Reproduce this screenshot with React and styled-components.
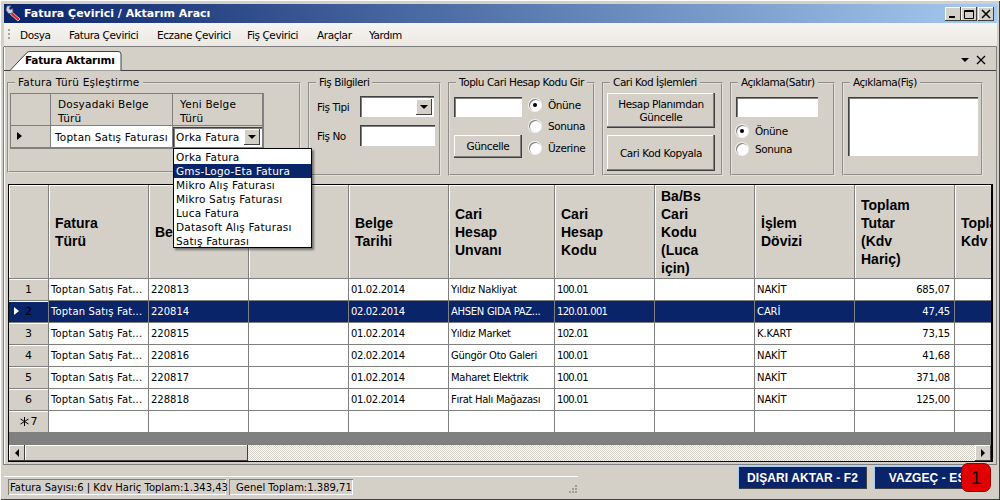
import React from "react";
import styled, { createGlobalStyle } from "styled-components";

const UI_FONT = `"DejaVu Sans", "Noto Sans", sans-serif`;
const FACE = "#d4d0c8";
const NAVY = "#0a246a";

const GlobalStyle = createGlobalStyle`
  html, body { margin: 0; padding: 0; background: ${FACE}; }
  body { font-family: ${UI_FONT}; font-size: 10.5px; letter-spacing: -0.4px; color: #000; }
  * { box-sizing: border-box; }
`;

const Win = styled.div`
  position: relative;
  width: 1000px;
  height: 500px;
  overflow: hidden;
  background: ${FACE};
  padding: 4px 3px 0 4px;
  display: flex;
  flex-direction: column;
  box-shadow: inset 1px 1px 0 #fff, inset -1px -1px 0 #404040;
`;
const TitleBar = styled.div`
  height: 19px;
  flex: none;
  display: flex;
  align-items: center;
  padding: 0 3px 0 1px;
  gap: 2px;
  background: linear-gradient(to right, ${NAVY}, #a6caf0);
  color: #fff;
  font-weight: bold;
  font-size: 11px;
  letter-spacing: 0;
`;
const TitleText = styled.span`
  flex: 1;
`;
const WinButton = styled.div`
  width: 16px;
  height: 14px;
  margin-left: ${(p) => p.$gap || 0}px;
  background: ${FACE};
  box-shadow: inset -1px -1px 0 #404040, inset 1px 1px 0 #fff;
  display: flex;
  align-items: center;
  justify-content: center;
`;
const MenuBar = styled.div`
  height: 24px;
  flex: none;
  display: flex;
  align-items: center;
  background: linear-gradient(to bottom, #f6f4f1, #ece9e4);
  border-bottom: 1px solid #808080;
  padding-left: 4px;
`;
const Gripper = styled.div`
  width: 2px;
  height: 11px;
  margin-right: 10px;
  background: repeating-linear-gradient(to bottom, #a8a59d 0 2px, transparent 2px 4px);
`;
const MenuItem = styled.span`
  width: ${(p) => p.$w}px;
  flex: none;
`;
const TabArea = styled.div`
  flex: none;
  height: 418px;
  margin-left: -1px;
  border-left: 1px solid #808080;
  border-right: 1px solid #808080;
  border-bottom: 1px solid #808080;
  box-shadow: inset 1px 0 0 #fff;
  display: flex;
  flex-direction: column;
`;
const TabStrip = styled.div`
  height: 24px;
  flex: none;
  position: relative;
  border-bottom: 1px solid #404040;
  display: flex;
  align-items: flex-end;
  padding-left: 6px;
`;
const Tab = styled.div`
  position: relative;
  width: 112px;
  height: 20px;
  margin-bottom: -1px;
  padding: 3px 0 0 15px;
  font-weight: bold;
  font-size: 10.5px;
  letter-spacing: -0.2px;
`;
const TabShape = styled.svg`
  position: absolute;
  left: 0;
  top: 0;
`;
const TabLabel = styled.span`
  position: relative;
`;
const TabTools = styled.div`
  margin-left: auto;
  display: flex;
  align-items: center;
  gap: 7px;
  padding: 0 10px 5px 0;
`;
const Groups = styled.div`
  display: flex;
  align-items: flex-start;
  gap: 7px;
  padding: 5px 0 0 3px;
  height: 113px;
  flex: none;
`;
const Group = styled.fieldset`
  position: relative;
  margin: 0;
  padding: 0;
  width: ${(p) => p.$w}px;
  height: ${(p) => p.$h || 100}px;
  border: 2px groove #e4e1da;
  min-width: 0;
  legend {
    margin-left: 6px;
    padding: 0 3px;
    font-size: 10.5px;
    line-height: 13px;
    letter-spacing: ${(p) => p.$ls ?? -0.45}px;
    white-space: nowrap;
  }
`;
const MapGrid = styled.div`
  width: 254px;
  margin: 4px 0 0 1px;
  border: 1px solid #808080;
  border-bottom: 2px solid #808080;
  letter-spacing: 0.2px;
`;
const MapRow = styled.div`
  display: grid;
  grid-template-columns: 40px 122px 90px;
`;
const MapHead = styled.div`
  height: 32px;
  padding: 3px 0 0 7px;
  line-height: 14px;
  border-right: 1px solid #808080;
  border-bottom: 1px solid #808080;
`;
const MapCell = styled.div`
  height: 21px;
  background: ${(p) => (p.$face ? FACE : "#fff")};
  border-right: 1px solid #808080;
  display: flex;
  align-items: center;
  padding-left: ${(p) => p.$pad ?? 4}px;
  position: relative;
`;
const Combo = styled.div`
  width: ${(p) => p.$w}px;
  height: ${(p) => p.$h || 21}px;
  display: flex;
  align-items: center;
  justify-content: space-between;
  background: #fff;
  padding: 0 2px 0 3px;
  box-shadow: inset 1px 1px 0 #404040, inset 2px 2px 0 #808080, inset -1px -1px 0 #fff;
  font-size: 10.5px;
`;
const ComboBtn = styled.div`
  width: 16px;
  height: 16px;
  background: ${FACE};
  box-shadow: inset -1px -1px 0 #404040, inset 1px 1px 0 #fff;
  display: flex;
  align-items: center;
  justify-content: center;
`;
const Arrow = styled.span`
  width: 0;
  height: 0;
  border-left: 4px solid transparent;
  border-right: 4px solid transparent;
  border-top: 4px solid #000;
`;
const Dropdown = styled.div`
  position: absolute;
  left: 173px;
  top: 148px;
  width: 139px;
  height: 100px;
  background: #fff;
  border: 1px solid #000;
  box-shadow: 2px 2px 2px rgba(0, 0, 0, 0.45);
  padding-top: 1px;
  z-index: 5;
  letter-spacing: 0.2px;
`;
const DropItem = styled.div`
  height: 14px;
  line-height: 14px;
  padding-left: 2px;
  background: ${(p) => (p.$on ? NAVY : "transparent")};
  color: ${(p) => (p.$on ? "#fff" : "#000")};
`;
const FieldRow = styled.div`
  display: flex;
  align-items: center;
  height: 21px;
  margin-top: ${(p) => p.$mt || 0}px;
  padding-left: 7px;
`;
const FieldLabel = styled.span`
  width: 43px;
  flex: none;
`;
const Input = styled.div`
  width: ${(p) => p.$w}px;
  height: ${(p) => p.$h || 21}px;
  flex: none;
  background: #fff;
  box-shadow: inset 1px 1px 0 #404040, inset 2px 2px 0 #808080, inset -1px -1px 0 #fff;
`;
const BulkBody = styled.div`
  display: grid;
  grid-template-columns: 68px 1fr;
  padding: 5px 0 0 4px;
  column-gap: 7px;
`;
const Stack = styled.div`
  display: flex;
  flex-direction: column;
  gap: ${(p) => p.$gap || 0}px;
  padding: ${(p) => p.$pad || "0"};
`;
const Push = styled.div`
  width: ${(p) => p.$w || 68}px;
  height: ${(p) => p.$h || 23}px;
  flex: none;
  background: ${FACE};
  box-shadow: inset -1px -1px 0 #404040, inset -2px -2px 0 #808080, inset 1px 1px 0 #fff;
  display: flex;
  align-items: center;
  justify-content: center;
  text-align: center;
  line-height: 13px;
`;
const Radio = styled.label`
  display: flex;
  align-items: center;
  gap: 7px;
  height: ${(p) => p.$h || 21}px;
`;
const RadioDot = styled.span`
  width: 12px;
  height: 12px;
  flex: none;
  border-radius: 50%;
  background: #fff;
  box-shadow: inset 1px 1px 0 #808080, 0 0 0 1px #f4f3f0;
  display: flex;
  align-items: center;
  justify-content: center;
  &::after {
    content: "";
    width: 4px;
    height: 4px;
    border-radius: 50%;
    background: ${(p) => (p.$on ? "#000" : "transparent")};
  }
`;
const GridFrame = styled.div`
  width: 985px;
  height: 278px;
  margin: 0 0 0 4px;
  border: 1px solid #000;
  border-width: 1px 2px 1px 1px;
  background: #808080;
  overflow: hidden;
  display: flex;
  flex-direction: column;
`;
const Row = styled.div`
  display: grid;
  grid-template-columns: 40px 100px 100px 100px 100px 106px 100px 100px 100px 100px 50px;
  flex: none;
  background: ${(p) => (p.$sel ? NAVY : "#fff")};
  color: ${(p) => (p.$sel ? "#fff" : "#000")};
`;
const HeadCell = styled.div`
  height: 94px;
  background: ${FACE};
  padding: 0 0 0 6px;
  display: flex;
  align-items: center;
  font-family: "Liberation Sans", Arial, sans-serif;
  font-weight: bold;
  font-size: 14px;
  line-height: 18px;
  letter-spacing: 0;
  color: #000;
  box-shadow: inset 1px 1px 0 #fff;
  border-right: 1px solid #808080;
  border-bottom: 1px solid #808080;
  white-space: pre-line;
`;
const RowHead = styled.div`
  height: 22px;
  background: ${(p) => (p.$sel ? NAVY : FACE)};
  color: #000;
  box-shadow: inset 0 1px 0 #fff;
  border-right: 1px solid #808080;
  border-bottom: 1px solid #808080;
  display: flex;
  align-items: center;
  justify-content: center;
  gap: 2px;
  position: relative;
  font-size: 11px;
  letter-spacing: 0;
`;
const RowMark = styled.span`
  position: absolute;
  left: ${(p) => p.$left || 5}px;
  top: 6px;
  width: 0;
  height: 0;
  border-top: 4px solid transparent;
  border-bottom: 4px solid transparent;
  border-left: 5px solid ${(p) => p.$color || "#000"};
`;
const Cell = styled.div`
  height: 22px;
  padding: 0 ${(p) => (p.$right ? 4 : 2)}px 0 2px;
  display: flex;
  align-items: center;
  justify-content: ${(p) => (p.$right ? "flex-end" : "flex-start")};
  border-right: 1px solid #808080;
  border-bottom: 1px solid #808080;
  font-size: 10px;
  letter-spacing: ${(p) => p.$ls ?? 0}px;
  white-space: nowrap;
  overflow: hidden;
`;
const Filler = styled.div`
  flex: 1;
`;
const ScrollBar = styled.div`
  height: 16px;
  flex: none;
  display: flex;
  background: conic-gradient(#fff 25%, ${FACE} 0 50%, #fff 0 75%, ${FACE} 0) 0 0 / 2px 2px;
`;
const ScrollBtn = styled.div`
  width: 16px;
  flex: none;
  background: ${FACE};
  box-shadow: inset -1px -1px 0 #404040, inset 1px 1px 0 #fff;
  display: flex;
  align-items: center;
  justify-content: center;
`;
const ScrollThumb = styled(ScrollBtn)`
  width: 223px;
`;
const ScrollGap = styled.div`
  flex: 1;
`;
const Tri = styled.span`
  width: 0;
  height: 0;
  border-top: 4px solid transparent;
  border-bottom: 4px solid transparent;
  border-${(p) => (p.$left ? "right" : "left")}: 4px solid #000;
`;
const Bottom = styled.div`
  flex: 1;
  display: flex;
  align-items: flex-start;
  position: relative;
`;
const StatusBar = styled.div`
  position: relative;
  width: 574px;
  height: 21px;
  margin-top: 11px;
  border-top: 1px solid #fff;
  display: flex;
  gap: 3px;
  padding: 2px 0 0 4px;
`;
const StatusPanel = styled.div`
  height: 16px;
  padding: 0 0 0 ${(p) => p.$pad}px;
  display: flex;
  align-items: center;
  box-shadow: inset 1px 1px 0 #808080, inset -1px -1px 0 #fff;
  width: ${(p) => p.$w}px;
  white-space: nowrap;
  font-size: 10px;
  letter-spacing: 0;
`;
const Grip = styled.svg`
  position: absolute;
  right: 0;
  bottom: 2px;
`;
const Actions = styled.div`
  display: flex;
  gap: 7px;
  margin: 1px 0 0 160px;
`;
const ActionBtn = styled.div`
  width: ${(p) => p.$w}px;
  height: 23px;
  background: ${NAVY};
  color: #fff;
  font-family: "Liberation Sans", Arial, sans-serif;
  font-weight: bold;
  font-size: 12px;
  letter-spacing: 0.1px;
  display: flex;
  align-items: center;
  justify-content: center;
  box-shadow: inset 1px 1px 0 #a6caf0, inset -1px -1px 0 #404040;
  white-space: nowrap;
  overflow: hidden;
`;
const Badge = styled.div`
  position: absolute;
  left: 961px;
  top: 463px;
  width: 30px;
  height: 29px;
  border-radius: 7px;
  background: #e00000;
  border: 1px solid #900;
  color: #111;
  font-family: "Liberation Sans", Arial, sans-serif;
  font-size: 19px;
  letter-spacing: 0;
  display: flex;
  align-items: center;
  justify-content: center;
  z-index: 6;
`;

const ToolsIcon = () => (
  <svg width="17" height="17" viewBox="0 0 17 17">
    <path d="M7 7 L15 14 L13 16 L5 9Z" fill="#e02020" stroke="#fff" strokeWidth="0.7" />
    <path d="M2 1 L6 0.8 L4.2 3.2 L5.2 4.8 L7.6 3.4 L8 6.6 L6 8.6 L3.4 8.4 L1 5Z" fill="#c9d2e2" stroke="#4a5570" strokeWidth="0.7" />
  </svg>
);

const rows = [
  ["220813", "01.02.2014", "Yıldız Nakliyat", "100.01", "NAKİT", "685,07"],
  ["220814", "02.02.2014", "AHSEN GIDA PAZ...", "120.01.001", "CARİ", "47,45"],
  ["220815", "01.02.2014", "Yıldız Market", "102.01", "K.KART", "73,15"],
  ["220816", "02.02.2014", "Güngör Oto Galeri", "100.01", "NAKİT", "41,68"],
  ["220817", "01.02.2014", "Maharet Elektrik", "100.01", "NAKİT", "371,08"],
  ["228818", "01.02.2014", "Fırat Halı Mağazası", "100.01", "NAKİT", "125,00"],
];
const heads = [
  "Fatura\nTürü",
  "Belge No",
  "",
  "Belge\nTarihi",
  "Cari\nHesap\nUnvanı",
  "Cari\nHesap\nKodu",
  "Ba/Bs\nCari\nKodu\n(Luca\niçin)",
  "İşlem\nDövizi",
  "Toplam\nTutar\n(Kdv\nHariç)",
  "Toplam\nKdv",
];
const menu = [
  ["Dosya", 49],
  ["Fatura Çevirici", 88],
  ["Eczane Çevirici", 90],
  ["Fiş Çevirici", 70],
  ["Araçlar", 52],
  ["Yardım", 60],
];
const options = [
  "Orka Fatura",
  "Gms-Logo-Eta Fatura",
  "Mikro Alış Faturası",
  "Mikro Satış Faturası",
  "Luca Fatura",
  "Datasoft Alış Faturası",
  "Satış Faturası",
];

export default function App() {
  return (
    <Win>
      <GlobalStyle />
      <TitleBar>
        <ToolsIcon />
        <TitleText>Fatura Çevirici / Aktarım Aracı</TitleText>
        <WinButton>
          <svg width="10" height="10"><rect x="1" y="7" width="6" height="2" fill="#000" /></svg>
        </WinButton>
        <WinButton $gap={-2}>
          <svg width="10" height="10"><path d="M0.5 1.5H9.5V9.5H0.5Z M0.5 2.5H9.5" fill="none" stroke="#000" /></svg>
        </WinButton>
        <WinButton $gap={-1}>
          <svg width="10" height="10"><path d="M1 1L9 9M9 1L1 9" stroke="#000" strokeWidth="1.6" /></svg>
        </WinButton>
      </TitleBar>
      <MenuBar>
        <Gripper />
        {menu.map(([label, w]) => (
          <MenuItem key={label} $w={w}>{label}</MenuItem>
        ))}
      </MenuBar>
      <TabArea>
        <TabStrip>
          <Tab>
            <TabShape width="112" height="20">
              <path d="M0 19.5 L17 1.5 Q18 0.5 20 0.5 L108 0.5 Q111 0.5 111 3 L111 20 L0 20Z" fill="#fff" stroke="#404040" />
            </TabShape>
            <TabLabel>Fatura Aktarımı</TabLabel>
          </Tab>
          <TabTools>
            <Arrow />
            <svg width="10" height="10"><path d="M1 1L9 9M9 1L1 9" stroke="#000" strokeWidth="1.3" /></svg>
          </TabTools>
        </TabStrip>
        <Groups>
          <Group $w={294} $h={97} $ls={0.2}>
            <legend>Fatura Türü Eşleştirme</legend>
            <MapGrid>
              <MapRow>
                <MapHead />
                <MapHead>Dosyadaki Belge<br />Türü</MapHead>
                <MapHead>Yeni Belge<br />Türü</MapHead>
              </MapRow>
              <MapRow>
                <MapCell $face><RowMark $left={6} /></MapCell>
                <MapCell>Toptan Satış Faturası</MapCell>
                <MapCell $face $pad={0}>
                  <Combo $w={89} $h={20}>
                    Orka Fatura
                    <ComboBtn><Arrow /></ComboBtn>
                  </Combo>
                </MapCell>
              </MapRow>
            </MapGrid>
          </Group>
          <Group $w={133}>
            <legend>Fiş Bilgileri</legend>
            <FieldRow $mt={7}>
              <FieldLabel>Fiş Tipi</FieldLabel>
              <Combo $w={74}><span /><ComboBtn><Arrow /></ComboBtn></Combo>
            </FieldRow>
            <FieldRow $mt={8}>
              <FieldLabel>Fiş No</FieldLabel>
              <Input $w={75} />
            </FieldRow>
          </Group>
          <Group $w={147}>
            <legend>Toplu Cari Hesap Kodu Gir</legend>
            <BulkBody>
              <Stack $gap={18} $pad="3px 0 0">
                <Input $w={68} $h={20} />
                <Push>Güncelle</Push>
              </Stack>
              <Stack>
                <Radio><RadioDot $on />Önüne</Radio>
                <Radio><RadioDot />Sonuna</Radio>
                <Radio $h={23}><RadioDot />Üzerine</Radio>
              </Stack>
            </BulkBody>
          </Group>
          <Group $w={121}>
            <legend>Cari Kod İşlemleri</legend>
            <Stack $gap={7} $pad="4px 0 0 3px">
              <Push $w={108} $h={35}>Hesap Planımdan<br />Güncelle</Push>
              <Push $w={108} $h={36}>Cari Kod Kopyala</Push>
            </Stack>
          </Group>
          <Group $w={105}>
            <legend>Açıklama(Satır)</legend>
            <Stack $pad="8px 0 0 4px" $gap={5}>
              <Input $w={82} $h={20} />
              <Stack>
                <Radio $h={18}><RadioDot $on />Önüne</Radio>
                <Radio $h={18}><RadioDot />Sonuna</Radio>
              </Stack>
            </Stack>
          </Group>
          <Group $w={141}>
            <legend>Açıklama(Fiş)</legend>
            <Stack $pad="8px 0 0 4px">
              <Input $w={130} $h={59} />
            </Stack>
          </Group>
        </Groups>
        <GridFrame>
          <Row>
            <HeadCell />
            {heads.map((h, i) => (
              <HeadCell key={i}>{h}</HeadCell>
            ))}
          </Row>
          {rows.map((r, i) => {
            const sel = i === 1;
            return (
              <Row key={i} $sel={sel}>
                <RowHead $sel={sel}>
                  {sel && <RowMark $color="#fff" />}
                  {i + 1}
                </RowHead>
                <Cell $ls={0.15}>Toptan Satış Fat...</Cell>
                <Cell>{r[0]}</Cell>
                <Cell />
                <Cell $ls={-0.35}>{r[1]}</Cell>
                <Cell $ls={-0.3}>{r[2]}</Cell>
                <Cell $ls={-0.7}>{r[3]}</Cell>
                <Cell />
                <Cell $ls={-0.1}>{r[4]}</Cell>
                <Cell $right $ls={-0.2}>{r[5]}</Cell>
                <Cell />
              </Row>
            );
          })}
          <Row>
            <RowHead>
              <svg width="9" height="9"><path d="M4.5 0V9M0.5 2L8.5 7M8.5 2L0.5 7" stroke="#000" /></svg>
              7
            </RowHead>
            {Array.from({ length: 10 }, (_, i) => <Cell key={i} />)}
          </Row>
          <Filler />
          <ScrollBar>
            <ScrollBtn><Tri $left /></ScrollBtn>
            <ScrollThumb />
            <ScrollGap />
            <ScrollBtn><Tri /></ScrollBtn>
          </ScrollBar>
        </GridFrame>
        <Dropdown>
          {options.map((o, i) => (
            <DropItem key={o} $on={i === 1}>{o}</DropItem>
          ))}
        </Dropdown>
      </TabArea>
      <Bottom>
        <StatusBar>
          <StatusPanel $w={218} $pad={2}>Fatura Sayısı:6 | Kdv Hariç Toplam:1.343,43</StatusPanel>
          <StatusPanel $w={124} $pad={7}>Genel Toplam:1.389,71</StatusPanel>
          <Grip width="12" height="12">
            <path d="M9 2h2v2H9zM6 5h2v2H6zM9 5h2v2H9zM3 8h2v2H3zM6 8h2v2H6zM9 8h2v2H9z" fill="#a09d95" />
          </Grip>
        </StatusBar>
        <Actions>
          <ActionBtn $w={129}>DIŞARI AKTAR - F2</ActionBtn>
          <ActionBtn $w={115}>VAZGEÇ - ESC</ActionBtn>
        </Actions>
      </Bottom>
      <Badge>1</Badge>
    </Win>
  );
}
